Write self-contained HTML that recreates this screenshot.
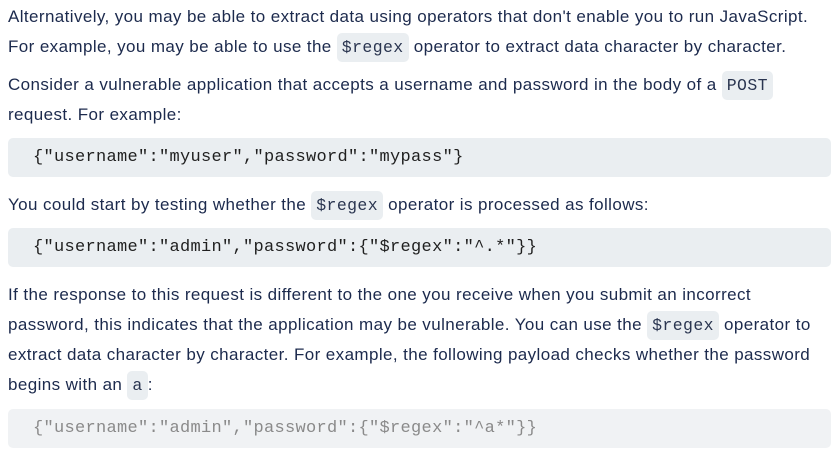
<!DOCTYPE html>
<html><head><meta charset="utf-8"><style>
body{margin:0;width:831px;height:466px;background:#fff;overflow:hidden;position:relative;font-family:"Liberation Sans",sans-serif;font-size:17px;letter-spacing:0.4px;color:#1c2a4d}
.l{position:absolute;left:8px;white-space:nowrap;line-height:30px}
code{font-family:"Liberation Mono",monospace;font-size:16.5px;letter-spacing:0.4px;background:#eaeef1;border-radius:5px;padding:5px 5px;color:#2a3550}
.pre{position:absolute;left:8px;width:823px;height:39px;background:#eaeef1;border-radius:5px;font-family:"Liberation Mono",monospace;font-size:17px;letter-spacing:0.3px;line-height:39px;color:#1f1f1f;white-space:pre}
.pre span{position:absolute;left:25px}
</style></head><body>
<div class="l" style="top:2px">Alternatively, you may be able to extract data using operators that don't enable you to run JavaScript.</div>
<div class="l" style="top:32px">For example, you may be able to use the <code>$regex</code> operator to extract data character by character.</div>
<div class="l" style="top:70px">Consider a vulnerable application that accepts a username and password in the body of a <code>POST</code></div>
<div class="l" style="top:100px">request. For example:</div>
<div class="pre" style="top:138px"><span>{"username":"myuser","password":"mypass"}</span></div>
<div class="l" style="top:190px">You could start by testing whether the <code>$regex</code> operator is processed as follows:</div>
<div class="pre" style="top:228px"><span>{"username":"admin","password":{"$regex":"^.*"}}</span></div>
<div class="l" style="top:280px">If the response to this request is different to the one you receive when you submit an incorrect</div>
<div class="l" style="top:310px">password, this indicates that the application may be vulnerable. You can use the <code>$regex</code> operator to</div>
<div class="l" style="top:340px">extract data character by character. For example, the following payload checks whether the password</div>
<div class="l" style="top:370px">begins with an <code>a</code>:</div>
<div class="pre" style="top:409px;background:#f0f2f4;color:#8a8a8a"><span>{"username":"admin","password":{"$regex":"^a*"}}</span></div>
</body></html>
